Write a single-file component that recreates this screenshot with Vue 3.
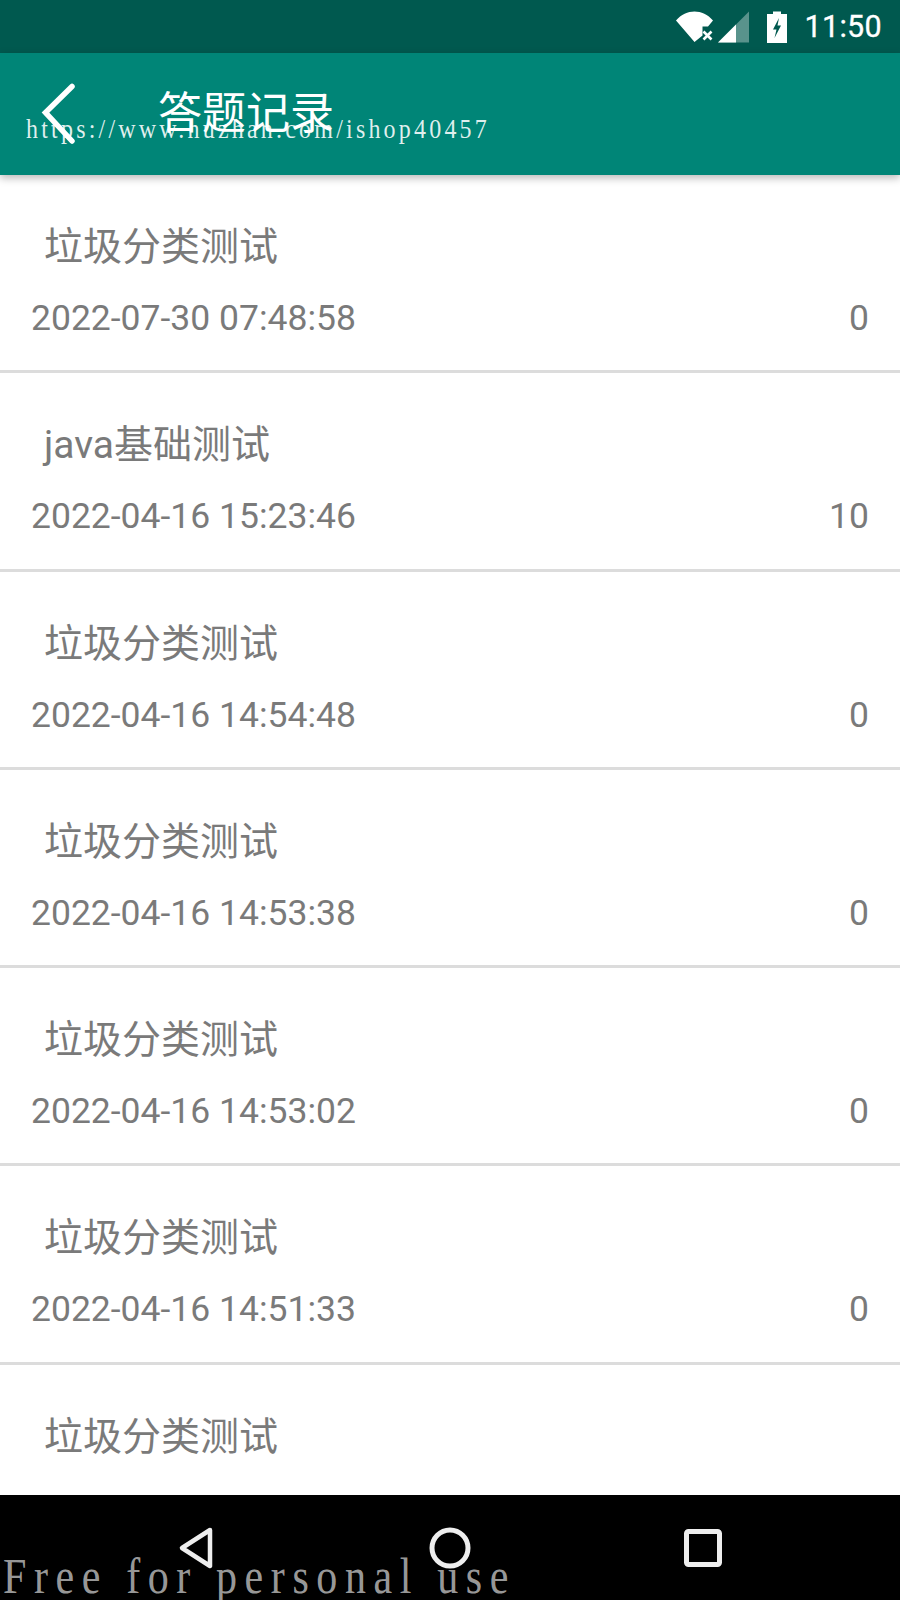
<script setup>
const rows = [
  { title: '垃圾分类测试', date: '2022-07-30 07:48:58', score: 0 },
  { title: 'java基础测试', date: '2022-04-16 15:23:46', score: 10 },
  { title: '垃圾分类测试', date: '2022-04-16 14:54:48', score: 0 },
  { title: '垃圾分类测试', date: '2022-04-16 14:53:38', score: 0 },
  { title: '垃圾分类测试', date: '2022-04-16 14:53:02', score: 0 },
  { title: '垃圾分类测试', date: '2022-04-16 14:51:33', score: 0 },
  { title: '垃圾分类测试', date: '2022-04-16 14:50:10', score: 0 },
]
</script>

<template>
  <div class="screen">
    <header class="status">
      <svg class="ic-wifi" width="40" height="32" viewBox="0 0 40 32">
        <path d="M1 9.500C6 3.500 13 0.500 19.500 0.500S33 3.500 38 9.500L33 15.500H27.500V24.500L19.500 31Z" fill="#fff" />
        <path d="M28.500 20.500l8 8M36.500 20.500l-8 8" stroke="#fff" stroke-width="2.600" />
      </svg>
      <svg class="ic-signal" width="32" height="32" viewBox="0 0 32 32">
        <path d="M31 0.500V31.500H0Z" fill="#fff" fill-opacity=".35" />
        <path d="M18 13.500V31.500H0Z" fill="#fff" />
      </svg>
      <svg class="ic-battery" width="20" height="32" viewBox="0 0 20 32">
        <path d="M6 0.500H14V3H20V32H0V3H6Z" fill="#fff" />
        <path d="M12 7L6 18.500H9.500L7.500 27L14 14.500H10.500Z" fill="#00594f" />
      </svg>
      <span class="time">11:50</span>
    </header>

    <div class="toolbar">
      <svg class="back" width="36" height="62" viewBox="0 0 36 62">
        <path d="M31 3.500L4.500 29.500L31 58" fill="none" stroke="#fff" stroke-width="5.500" stroke-linecap="round" stroke-linejoin="miter" />
      </svg>
      <span class="heading">答题记录</span>
    </div>

    <main class="list">
      <article v-for="row in rows" :key="row.date" class="row">
        <div class="title">{{ row.title }}</div>
        <div class="meta">
          <span>{{ row.date }}</span>
          <span>{{ row.score }}</span>
        </div>
      </article>
    </main>

    <nav class="navbar">
      <svg class="nav-back" width="36" height="44" viewBox="0 0 36 44">
        <path d="M32 4L4 22L32 40Z" fill="none" stroke="#eee" stroke-width="4.500" stroke-linejoin="round" />
      </svg>
      <svg class="nav-home" width="44" height="44" viewBox="0 0 44 44">
        <circle cx="22" cy="22" r="18" fill="none" stroke="#eee" stroke-width="5" />
      </svg>
      <svg class="nav-recent" width="38" height="38" viewBox="0 0 38 38">
        <rect x="2.500" y="2.500" width="33" height="33" rx="2" fill="none" stroke="#eee" stroke-width="5" />
      </svg>
    </nav>

    <div class="mark mark-url">https://www.huzhan.com/ishop40457</div>
    <div class="mark mark-free">Free for personal use</div>
  </div>
</template>

<style>
html, body { margin: 0; background: #fff; }
</style>

<style scoped>
.screen {
  position: relative;
  width: 900px;
  height: 1600px;
  overflow: hidden;
  display: flex;
  flex-direction: column;
  background: #fff;
  font-family: Roboto, "Noto Sans CJK SC", sans-serif;
}
.status {
  height: 53px;
  flex: none;
  background: #00594f;
  display: flex;
  align-items: center;
  justify-content: flex-end;
  padding-right: 18px;
  color: #fff;
}
.ic-wifi { margin-right: 3px; }
.ic-signal { margin-right: 17px; }
.ic-battery { margin-right: 18px; }
.time { font-size: 30.500px; line-height: 36px; letter-spacing: .3px; -webkit-text-stroke: .3px #fff; }
.toolbar {
  height: 122px;
  flex: none;
  position: relative;
  z-index: 1;
  background: #008577;
  box-shadow: 0 3px 8px rgba(0, 0, 0, .28);
  display: flex;
  align-items: center;
  padding-left: 41px;
  color: #fff;
}
.back { margin-right: 81px; }
.heading { font-size: 44px; line-height: 60px; }
.list { flex: 1; min-height: 0; overflow: hidden; }
.row {
  box-sizing: border-box;
  height: 198.250px;
  border-bottom: 3px solid #dcdcdc;
  color: #7a7a7a;
}
.title {
  padding: 43px 0 0 44px;
  font-size: 39px;
  line-height: 58px;
}
.meta {
  display: flex;
  justify-content: space-between;
  padding: 21px 31px 0 31px;
  font-size: 35.500px;
  line-height: 42px;
}
.navbar {
  height: 105px;
  flex: none;
  position: relative;
  background: #000;
}
.nav-back, .nav-home, .nav-recent { position: absolute; top: 31px; }
.nav-back { left: 178px; }
.nav-home { left: 428px; }
.nav-recent { left: 684px; top: 34px; }
.mark {
  position: absolute;
  z-index: 2;
  font-family: "Liberation Serif", serif;
  white-space: pre;
  pointer-events: none;
  transform-origin: left bottom;
}
.mark-url {
  left: 26px;
  top: 115px;
  font-size: 24px;
  line-height: 32px;
  letter-spacing: 3.200px;
  transform: scaleY(1.15);
  color: rgba(255, 255, 255, .88);
}
.mark-free {
  left: 3px;
  top: 1560px;
  font-size: 42px;
  line-height: 40px;
  letter-spacing: 7.600px;
  transform: scaleY(1.2);
  color: rgba(255, 255, 255, .62);
}
</style>
